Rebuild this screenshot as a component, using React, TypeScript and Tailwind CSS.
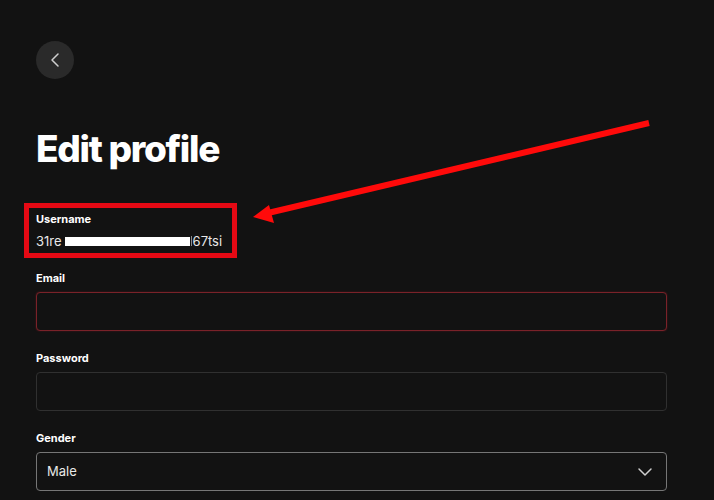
import { ChevronLeft, ChevronDown } from "lucide-react";

const font = { fontFamily: "Inter, 'Noto Sans', sans-serif" };

function Field({ label, borderClass, children }: { label: string; borderClass: string; children?: React.ReactNode }) {
  return (
    <div className="flex flex-col">
      <label className="text-[11px] font-bold leading-4 text-white mb-[6px]">{label}</label>
      <div className={`h-[39px] rounded-[4px] border bg-[#121212] flex items-center ${borderClass}`}>
        {children}
      </div>
    </div>
  );
}

export default function App() {
  return (
    <div className="relative w-[714px] h-[500px] overflow-hidden bg-[#121212] text-white" style={font}>
      <div className="pl-[36px] pr-[47px] pt-[41px]">
        <button className="w-[38px] h-[38px] rounded-full bg-[#2a2a2a] flex items-center justify-center text-[#cfcfcf]">
          <ChevronLeft size={24} strokeWidth={1.5} />
        </button>

        <h1 className="mt-[48px] text-[37px] leading-[44px] font-extrabold tracking-[-0.035em]">Edit profile</h1>

        <div className="mt-[32px] -ml-[12px] w-[213px] border-[5px] border-[#e50914] px-[7px] pt-[3px] pb-[4px]">
          <div className="text-[11px] font-bold leading-4">Username</div>
          <div className="mt-[6px] flex items-center text-[13px] leading-4 text-[#e8e8e8]">
            <span>31re</span>
            <span className="ml-[3px] w-[125px] h-[9px] bg-white" />
            <span className="ml-[1px] w-px h-[10px] bg-[#8a8a8a]" />
            <span className="ml-[1px]">67tsi</span>
          </div>
        </div>

        <div className="mt-[12px] flex flex-col gap-[19px]">
          <Field label="Email" borderClass="border-[#7a2229] shadow-[0_0_2px_rgba(150,30,40,0.5)]" />
          <Field label="Password" borderClass="border-[#303030]" />
          <Field label="Gender" borderClass="border-[#767676]">
            <div className="flex-1 flex items-center justify-between pl-[10px] pr-[9px]">
              <span className="text-[13px] text-[#e8e8e8]">Male</span>
              <ChevronDown size={24} strokeWidth={1.5} className="text-[#cfcfcf]" />
            </div>
          </Field>
        </div>
      </div>

      <svg className="absolute inset-0 pointer-events-none" width="714" height="500" viewBox="0 0 714 500">
        <line x1="649" y1="123" x2="268" y2="213" stroke="#ff0a0a" strokeWidth="6" strokeLinecap="butt" />
        <polygon points="253,217 269,205 274,223" fill="#ff0a0a" />
      </svg>
    </div>
  );
}
